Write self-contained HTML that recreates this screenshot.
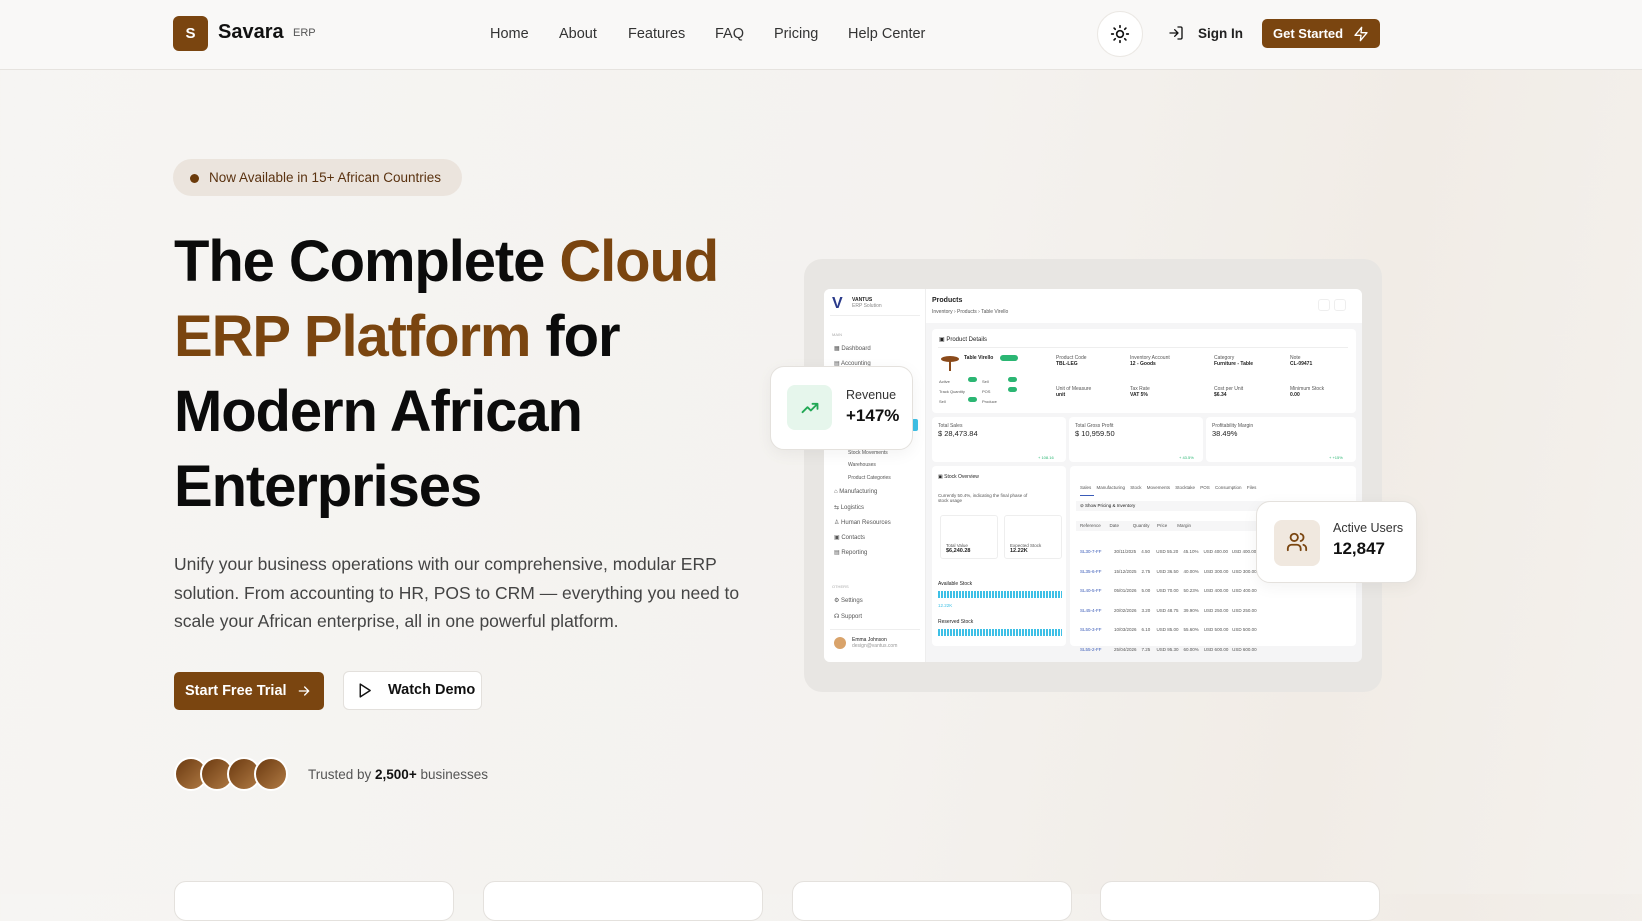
<!DOCTYPE html>
<html><head><meta charset="utf-8"><style>
*{box-sizing:border-box;margin:0;padding:0}
body{width:1642px;height:894px;overflow:hidden;font-family:"Liberation Sans",sans-serif;background:linear-gradient(100deg,#f6f5f3 0%,#f4f2ef 55%,#f1ece6 80%,#f4f1ed 100%);position:relative;color:#111}
.abs{position:absolute}
header{position:absolute;left:0;top:0;width:1642px;height:70px;background:#f9f8f7;border-bottom:1px solid #e6e3df}
.nav a{position:absolute;top:26px;font-size:14.5px;color:#333;text-decoration:none}
.brown{color:#7a4510}
h1{position:absolute;left:174px;top:224px;font-size:58px;line-height:75px;font-weight:700;letter-spacing:-1.1px;color:#0b0b0b}
p.lead{position:absolute;left:174px;top:550px;width:580px;font-size:17.5px;line-height:28.5px;color:#444}
.card{background:#fff;border:1px solid #e4e1dd;border-radius:12px}
.mk{position:absolute;font-size:6px;color:#555}
.bx{position:absolute;background:#fff;border:1px solid #eee;border-radius:3px}
</style></head><body>
<header>
<div class="abs" style="left:173px;top:16px;width:35px;height:35px;background:#7a4510;border-radius:6px;color:#fff;font-weight:700;font-size:15px;text-align:center;line-height:35px">S</div>
<div class="abs" style="left:218px;top:21px;font-size:20px;font-weight:700">Savara</div>
<div class="abs" style="left:293px;top:27px;font-size:11px;color:#555">ERP</div>
<div class="nav"><a style="left:490px">Home</a><a style="left:559px">About</a><a style="left:628px">Features</a><a style="left:715px">FAQ</a><a style="left:774px">Pricing</a><a style="left:848px">Help Center</a></div>
<div class="abs" style="left:1097px;top:11px;width:46px;height:46px;border-radius:50%;background:#fff;border:1px solid #ebe8e4"></div>
<svg class="abs" style="left:1110px;top:24px" width="20" height="20" viewBox="0 0 24 24" fill="none" stroke="#111" stroke-width="2" stroke-linecap="round"><circle cx="12" cy="12" r="4"/><path d="M12 2v2M12 20v2M4.9 4.9l1.4 1.4M17.7 17.7l1.4 1.4M2 12h2M20 12h2M4.9 19.1l1.4-1.4M17.7 6.3l1.4-1.4"/></svg>
<svg class="abs" style="left:1168px;top:25px" width="16" height="16" viewBox="0 0 24 24" fill="none" stroke="#111" stroke-width="2" stroke-linecap="round" stroke-linejoin="round"><path d="M15 3h4a2 2 0 0 1 2 2v14a2 2 0 0 1-2 2h-4M10 17l5-5-5-5M15 12H3"/></svg>
<div class="abs" style="left:1198px;top:26px;font-size:13.5px;font-weight:700;color:#222">Sign In</div>
<div class="abs" style="left:1262px;top:19px;width:118px;height:29px;background:#7a4510;border-radius:5px;color:#fff;font-size:13px;font-weight:700;line-height:29px;padding-left:11px">Get Started</div>
<svg class="abs" style="left:1353px;top:26px" width="16" height="16" viewBox="0 0 24 24" fill="none" stroke="#fff" stroke-width="2" stroke-linejoin="round"><path d="M13 2L3 14h9l-1 8 10-12h-9l1-8z"/></svg>
</header>

<div class="abs" style="left:173px;top:159px;width:289px;height:37px;border-radius:19px;background:#ebe4dd"></div>
<div class="abs" style="left:190px;top:174px;width:9px;height:9px;border-radius:50%;background:#6b3a0a"></div>
<div class="abs" style="left:209px;top:170px;font-size:13.5px;color:#5a3210">Now Available in 15+ African Countries</div>

<h1>The Complete <span class="brown">Cloud</span><br><span class="brown">ERP Platform</span> for<br>Modern African<br>Enterprises</h1>
<p class="lead">Unify your business operations with our comprehensive, modular ERP solution. From accounting to HR, POS to CRM — everything you need to scale your African enterprise, all in one powerful platform.</p>

<div class="abs" style="left:174px;top:672px;width:150px;height:38px;background:#7a4510;border-radius:5px;color:#fff;font-size:14.5px;font-weight:700;line-height:38px;padding-left:11px">Start Free Trial</div>
<svg class="abs" style="left:296px;top:683px" width="16" height="16" viewBox="0 0 24 24" fill="none" stroke="#fff" stroke-width="2" stroke-linecap="round"><path d="M5 12h14M13 6l6 6-6 6"/></svg>
<div class="abs" style="left:343px;top:671px;width:139px;height:39px;background:#fff;border:1px solid #e3e0dc;border-radius:6px;font-size:14.5px;font-weight:700;line-height:37px;padding-left:44px">Watch Demo</div>
<svg class="abs" style="left:356px;top:682px" width="17" height="17" viewBox="0 0 24 24" fill="none" stroke="#111" stroke-width="2" stroke-linejoin="round"><path d="M6 3l14 9-14 9z"/></svg>

<div class="abs" style="left:174px;top:757px;width:34px;height:34px;border-radius:50%;background:linear-gradient(135deg,#6b3a10,#b07a44);border:2px solid #fff"></div>
<div class="abs" style="left:200px;top:757px;width:34px;height:34px;border-radius:50%;background:linear-gradient(135deg,#6b3a10,#b07a44);border:2px solid #fff"></div>
<div class="abs" style="left:227px;top:757px;width:34px;height:34px;border-radius:50%;background:linear-gradient(135deg,#6b3a10,#b07a44);border:2px solid #fff"></div>
<div class="abs" style="left:254px;top:757px;width:34px;height:34px;border-radius:50%;background:linear-gradient(135deg,#6b3a10,#b07a44);border:2px solid #fff"></div>
<div class="abs" style="left:308px;top:767px;font-size:13.5px;color:#555">Trusted by <b style="color:#111">2,500+</b> businesses</div>

<!-- mockup -->
<div class="abs" style="left:804px;top:259px;width:578px;height:433px;border-radius:18px;background:#e8e6e3"></div>
<div class="abs" style="left:824px;top:289px;width:538px;height:373px;border-radius:6px;background:#f5f5f6;overflow:hidden">
  <div class="abs" style="left:0;top:0;width:102px;height:373px;background:#fff;border-right:1px solid #eee"></div>
  <div class="abs" style="left:8px;top:6px;font-size:16px;font-weight:700;color:#2a3a8a">V</div>
  <div class="mk" style="left:28px;top:8px;font-weight:700;color:#222;font-size:5px">VANTUS<br><span style="font-weight:400;color:#888">ERP Solution</span></div>
  <div class="abs" style="left:6px;top:26px;width:90px;height:1px;background:#eee"></div>
  <div class="mk" style="left:8px;top:43px;font-size:4px;color:#aaa">MAIN</div>
  <div class="mk" style="left:10px;top:56px">▦ Dashboard</div>
  <div class="mk" style="left:10px;top:71px">▤ Accounting</div>
  <div class="abs" style="left:88px;top:130px;width:6px;height:12px;background:#3ec0e6;border-radius:2px"></div>
  <div class="mk" style="left:24px;top:161px;font-size:5px">Stock Movements</div>
  <div class="mk" style="left:24px;top:173px;font-size:5px">Warehouses</div>
  <div class="mk" style="left:24px;top:186px;font-size:5px">Product Categories</div>
  <div class="mk" style="left:10px;top:200px">⌂ Manufacturing</div>
  <div class="mk" style="left:10px;top:215px">⇆ Logistics</div>
  <div class="mk" style="left:10px;top:230px">♙ Human Resources</div>
  <div class="mk" style="left:10px;top:245px">▣ Contacts</div>
  <div class="mk" style="left:10px;top:260px">▤ Reporting</div>
  <div class="mk" style="left:8px;top:295px;font-size:4px;color:#aaa">OTHERS</div>
  <div class="mk" style="left:10px;top:308px">⚙ Settings</div>
  <div class="mk" style="left:10px;top:324px">☊ Support</div>
  <div class="abs" style="left:6px;top:340px;width:90px;height:1px;background:#eee"></div>
  <div class="abs" style="left:10px;top:348px;width:12px;height:12px;border-radius:50%;background:#d9a36a"></div>
  <div class="mk" style="left:28px;top:348px;color:#222;font-size:5px">Emma Johnson<br><span style="color:#999">design@vantus.com</span></div>
  <div class="abs" style="left:102px;top:0;width:436px;height:34px;background:#fff"></div>
  <div class="mk" style="left:108px;top:8px;font-size:7px;font-weight:700;color:#222">Products</div>
  <div class="mk" style="left:108px;top:20px;font-size:5px">Inventory › Products › Table Virello</div>
  <div class="bx" style="left:510px;top:10px;width:12px;height:12px"></div>
  <div class="bx" style="left:494px;top:10px;width:12px;height:12px"></div>
  <div class="abs" style="left:108px;top:40px;width:424px;height:84px;background:#fff;border-radius:4px"></div>
  <div class="mk" style="left:115px;top:47px;color:#222">▣ Product Details</div>
  <div class="abs" style="left:114px;top:58px;width:410px;height:1px;background:#eee"></div>
  <div class="abs" style="left:117px;top:67px;width:18px;height:6px;border-radius:50%;background:#8a4a1a"></div>
  <div class="abs" style="left:125px;top:72px;width:2px;height:10px;background:#8a4a1a"></div>
  <div class="mk" style="left:140px;top:66px;color:#222;font-weight:700;font-size:5px">Table Virello</div>
  <div class="abs" style="left:176px;top:66px;width:18px;height:6px;border-radius:3px;background:#2bb673"></div>
  <div class="mk" style="left:115px;top:88px;line-height:10px;font-size:4px">Active<br>Track Quantity<br>Sell</div>
  <div class="mk" style="left:158px;top:88px;line-height:10px;font-size:4px">Sell<br>POS<br>Produce</div>
  <div class="abs" style="left:144px;top:88px;width:9px;height:5px;border-radius:3px;background:#2bb673"></div>
  <div class="abs" style="left:144px;top:108px;width:9px;height:5px;border-radius:3px;background:#2bb673"></div>
  <div class="abs" style="left:184px;top:88px;width:9px;height:5px;border-radius:3px;background:#2bb673"></div>
  <div class="abs" style="left:184px;top:98px;width:9px;height:5px;border-radius:3px;background:#2bb673"></div>
  <div class="mk" style="left:232px;top:66px;font-size:5px">Product Code<br><b style="color:#222">TBL-LEG</b></div>
  <div class="mk" style="left:306px;top:66px;font-size:5px">Inventory Account<br><b style="color:#222">12 - Goods</b></div>
  <div class="mk" style="left:390px;top:66px;font-size:5px">Category<br><b style="color:#222">Furniture - Table</b></div>
  <div class="mk" style="left:466px;top:66px;font-size:5px">Note<br><b style="color:#222">CL-09471</b></div>
  <div class="mk" style="left:232px;top:97px;font-size:5px">Unit of Measure<br><b style="color:#222">unit</b></div>
  <div class="mk" style="left:306px;top:97px;font-size:5px">Tax Rate<br><b style="color:#222">VAT 5%</b></div>
  <div class="mk" style="left:390px;top:97px;font-size:5px">Cost per Unit<br><b style="color:#222">$6.34</b></div>
  <div class="mk" style="left:466px;top:97px;font-size:5px">Minimum Stock<br><b style="color:#222">0.00</b></div>
  <div class="abs" style="left:108px;top:128px;width:134px;height:45px;background:#fff;border-radius:4px"></div>
  <div class="abs" style="left:245px;top:128px;width:134px;height:45px;background:#fff;border-radius:4px"></div>
  <div class="abs" style="left:382px;top:128px;width:150px;height:45px;background:#fff;border-radius:4px"></div>
  <div class="mk" style="left:114px;top:134px;font-size:5px">Total Sales<br><span style="font-size:7.5px;color:#222">$ 28,473.84</span></div>
  <div class="mk" style="left:251px;top:134px;font-size:5px">Total Gross Profit<br><span style="font-size:7.5px;color:#222">$ 10,959.50</span></div>
  <div class="mk" style="left:388px;top:134px;font-size:5px">Profitability Margin<br><span style="font-size:7.5px;color:#222">38.49%</span></div>
  <div class="mk" style="left:214px;top:166px;font-size:4px;color:#2bb673">+ 108.16</div>
  <div class="mk" style="left:355px;top:166px;font-size:4px;color:#2bb673">+ 43.5%</div>
  <div class="mk" style="left:505px;top:166px;font-size:4px;color:#2bb673">+ +15%</div>
  <div class="abs" style="left:108px;top:177px;width:134px;height:180px;background:#fff;border-radius:4px"></div>
  <div class="mk" style="left:114px;top:185px;color:#222;font-size:5px">▣ Stock Overview</div>
  <div class="mk" style="left:114px;top:204px;font-size:4.5px">Currently 50.4%, indicating the final phase of<br>stock usage</div>
  <div class="bx" style="left:116px;top:226px;width:58px;height:44px"></div>
  <div class="bx" style="left:180px;top:226px;width:58px;height:44px"></div>
  <div class="mk" style="left:122px;top:254px;font-size:4.5px">Total Value<br><b style="color:#222;font-size:5.5px">$6,240.28</b></div>
  <div class="mk" style="left:186px;top:254px;font-size:4.5px">Expected Stock<br><b style="color:#222;font-size:5.5px">12.22K</b></div>
  <div class="mk" style="left:114px;top:292px;color:#222;font-size:5px">Available Stock</div>
  <div class="abs" style="left:114px;top:302px;width:124px;height:7px;background:repeating-linear-gradient(90deg,#3ec0e6 0 2px,transparent 2px 3px)"></div>
  <div class="mk" style="left:114px;top:314px;font-size:4.5px;color:#3ec0e6">12.22K</div>
  <div class="mk" style="left:114px;top:330px;color:#222;font-size:5px">Reserved Stock</div>
  <div class="abs" style="left:114px;top:340px;width:124px;height:7px;background:repeating-linear-gradient(90deg,#3ec0e6 0 2px,transparent 2px 3px)"></div>
  <div class="abs" style="left:246px;top:177px;width:286px;height:180px;background:#fff;border-radius:4px"></div>
  <div class="mk" style="left:256px;top:196px;font-size:4.5px;word-spacing:4px">Sales Manufacturing Stock&nbsp;Movements Stocktake POS Consumption Files</div>
  <div class="abs" style="left:256px;top:206px;width:14px;height:1px;background:#3a5bb8"></div>
  <div class="abs" style="left:252px;top:212px;width:274px;height:10px;background:#f6f6f7"></div>
  <div class="mk" style="left:256px;top:214px;font-size:4.5px;color:#222">⊘ Show Pricing &amp; Inventory</div>
  <div class="abs" style="left:252px;top:232px;width:274px;height:10px;background:#f6f6f7"></div>
  <div class="mk" style="left:256px;top:234px;font-size:4.5px">Reference &nbsp;&nbsp;&nbsp;&nbsp;&nbsp; Date &nbsp;&nbsp;&nbsp;&nbsp;&nbsp;&nbsp;&nbsp;&nbsp;&nbsp; Quantity &nbsp;&nbsp;&nbsp;&nbsp; Price &nbsp;&nbsp;&nbsp;&nbsp;&nbsp;&nbsp; Margin</div>
  <div class="mk" style="left:256px;top:253px;line-height:19.5px;font-size:4.5px;color:#3a5bb8">SL30-7-FF<br>SL35-6-FF<br>SL40-5-FF<br>SL45-4-FF<br>SL50-3-FF<br>SL55-2-FF</div>
  <div class="mk" style="left:290px;top:253px;line-height:19.5px;font-size:4.5px;white-space:pre">30/11/2025    4.50     USD 55.20    45.10%    USD 400.00   USD 400.00
15/12/2025    2.75     USD 36.50    40.00%    USD 300.00   USD 300.00
05/01/2026    5.00     USD 70.00    50.23%    USD 400.00   USD 400.00
20/02/2026    3.20     USD 48.75    39.90%    USD 250.00   USD 250.00
10/03/2026    6.10     USD 85.00    55.60%    USD 500.00   USD 500.00
25/04/2026    7.25     USD 95.30    60.00%    USD 600.00   USD 600.00</div>
</div>

<div class="abs card" style="left:770px;top:366px;width:143px;height:84px;border-radius:14px;box-shadow:0 4px 16px rgba(0,0,0,.05)"></div>
<div class="abs" style="left:787px;top:385px;width:45px;height:45px;border-radius:8px;background:#e6f6ec"></div>
<svg class="abs" style="left:800px;top:398px" width="20" height="20" viewBox="0 0 24 24" fill="none" stroke="#22a855" stroke-width="2.2" stroke-linecap="round" stroke-linejoin="round"><path d="M3 17l6-6 4 4 8-8M15 7h6v6"/></svg>
<div class="abs" style="left:846px;top:388px;font-size:12.5px;color:#333">Revenue</div>
<div class="abs" style="left:846px;top:406px;font-size:17px;font-weight:700">+147%</div>

<div class="abs card" style="left:1256px;top:501px;width:161px;height:82px;border-radius:14px;box-shadow:0 4px 16px rgba(0,0,0,.05)"></div>
<div class="abs" style="left:1274px;top:520px;width:46px;height:46px;border-radius:8px;background:#f0e8df"></div>
<svg class="abs" style="left:1286px;top:531px" width="22" height="22" viewBox="0 0 24 24" fill="none" stroke="#7a4510" stroke-width="2" stroke-linecap="round"><circle cx="9" cy="7" r="4"/><path d="M2 21v-2a4 4 0 0 1 4-4h6a4 4 0 0 1 4 4v2M16 3.1a4 4 0 0 1 0 7.8M22 21v-2a4 4 0 0 0-3-3.9"/></svg>
<div class="abs" style="left:1333px;top:521px;font-size:12.5px;color:#333">Active Users</div>
<div class="abs" style="left:1333px;top:539px;font-size:17px;font-weight:700">12,847</div>

<div class="abs card" style="left:174px;top:881px;width:280px;height:40px"></div>
<div class="abs card" style="left:483px;top:881px;width:280px;height:40px"></div>
<div class="abs card" style="left:792px;top:881px;width:280px;height:40px"></div>
<div class="abs card" style="left:1100px;top:881px;width:280px;height:40px"></div>
</body></html>
